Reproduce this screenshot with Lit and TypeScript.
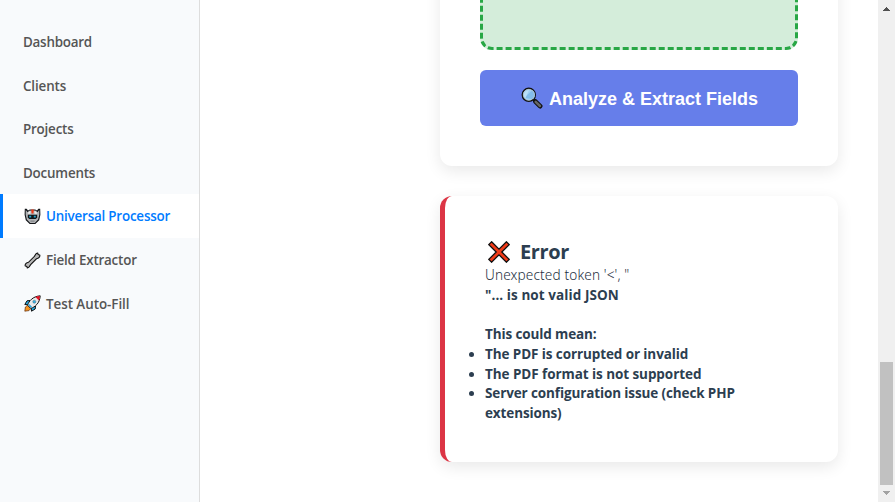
import { LitElement, html, css, svg } from "lit";
import { customElement } from "lit/decorators.js";
import { classMap } from "lit/directives/class-map.js";

const robot = svg`<svg class="ico" viewBox="0 0 17 17">
  <path d="M.8.800H2.600L4 2.600 5.800 1.400h5.400L13 2.600 14.400.800h1.800l.2 6-1.200 5.400-3.900 3.900H5.700L1.800 12.200.6 6.800Z" fill="#15171a"/>
  <path d="M1.700 2 3.600 4.200 5.600 2.500h5.800l2 1.700L15.300 2v4.800l-1.200 4.700-3.300 3.500H6.200l-3.300-3.500-1.200-4.700Z" fill="#b2b4b6"/>
  <path d="M7.200 1.600h2.600l-.4 4H7.600Z" fill="#f03a17"/>
  <path d="M4.500 3.800 6.500 3v2.800H4Zm8 0L10.500 3v2.800H13Z" fill="#eee"/>
  <path d="M3.800 6.800h9.400v3l-1.500 1.200H5.300L3.800 9.800Z" fill="#111518"/>
  <path d="M5.200 7.700h2v1.900h-2Zm4.600 0h2v1.900h-2Z" fill="#24a6cc"/>
  <path d="M6.400 12.600h4.200v1H6.400Z" fill="#77797b"/></svg>`;

const wrench = svg`<svg class="ico" viewBox="0 0 17 17">
  <path d="M3.300 13.700 13.600 3.400" stroke="#111" stroke-width="4.200"/>
  <path d="M11 5.600c-.6-2 .6-4.300 2.700-4.600l.5 1.600 1.600.5c.4 2.100-1.600 3.700-3.500 3.300M6 11.400c.6 2-.6 4.300-2.700 4.600l-.5-1.600-1.600-.5c-.4-2.100 1.600-3.700 3.500-3.300" fill="#b4b4b4" stroke="#111" stroke-width="1.100"/>
  <path d="M3.400 13.600 13.500 3.500" stroke="#b8b8b8" stroke-width="2.100"/></svg>`;

const rocket = svg`<svg class="ico" viewBox="0 0 17 17">
  <path d="m6 5.500-3 .3L.8 9.500l3 .2M11.500 11l-.3 3-3.700 2.200-.2-3" fill="#27a9e3" stroke="#111" stroke-width="1"/>
  <path d="M3.400 10.400 1.400 12 .8 16.200 5 15.600 6.700 13.600Z" fill="#f7941d" stroke="#5b2b10" stroke-width=".7"/>
  <path d="M3.600 10.200C5 6 8.500 1.500 16.200.8 15.800 8.300 11 12 6.800 13.400Z" fill="#e9eaeb" stroke="#111" stroke-width="1"/>
  <path d="M11.400 2c1.500-.7 3-.9 4.500-.9-.1 1.600-.4 3.100-.9 4.500Z" fill="#e81224"/>
  <circle cx="10.300" cy="6.700" r="1.500" fill="#2fb1e8" stroke="#55646d" stroke-width=".5"/>
  <path d="m4.700 9.500 2.800 2.800" stroke="#27a9e3" stroke-width="1.500"/></svg>`;

const lens = svg`<svg class="lens" viewBox="0 0 22 22">
  <path d="m12.200 12.400 2.500 2.500" stroke="#111" stroke-width="2.200"/>
  <path d="m14.500 14.600 4.600 4.500" stroke="#111" stroke-width="4.800" stroke-linecap="round"/>
  <path d="m14.700 14.800 4.300 4.200" stroke="#666" stroke-width="2.500" stroke-linecap="round"/>
  <circle cx="7.800" cy="7.800" r="6.500" fill="#9fd0f4" stroke="#111" stroke-width="1.500"/>
  <path d="M3.300 10.800 11.500 3a6 6 0 0 1 .7 9.200" fill="#83bdec"/>
  <path d="M2.800 8.500C2.600 5.500 5 3 8 2.900L4.400 11.300A5 5 0 0 1 2.800 8.500Z" fill="#b9dff9"/>
  <circle cx="7.800" cy="7.800" r="5.500" fill="none" stroke="#bcc6cc" stroke-width=".7"/></svg>`;

const cross = svg`<svg class="cross" viewBox="0 0 22 22">
  <path d="M3.600.8 11 8.200 18.400.8l2.800 2.800L13.800 11l7.400 7.400-2.800 2.800L11 13.800l-7.400 7.400L.8 18.400 8.200 11 .8 3.600Z" fill="#f03a17" stroke="#111" stroke-width="1.300"/></svg>`;

const items = [
  { label: "Dashboard", cls: "n0" },
  { label: "Clients", cls: "n1" },
  { label: "Projects", cls: "n2" },
  { label: "Documents", cls: "n3" },
  { label: "Universal Processor", cls: "n4", icon: robot, active: true },
  { label: "Field Extractor", cls: "n5", icon: wrench },
  { label: "Test Auto-Fill", cls: "n6", icon: rocket },
];

@customElement("app-root")
export class AppRoot extends LitElement {
  static styles = css`
    :host { display: flex; height: 502px; overflow: hidden; background: #fff; color: #2c3e50;
      font: 14px/19.6px "Open Sans", "Noto Sans", sans-serif; }
    * { box-sizing: border-box; }
    svg { display: block; flex: none; fill: none; }
    nav { width: 200px; flex: none; padding-top: 19.600px; background: #f8fafc; border-right: 1px solid #ddd; }
    .item { display: flex; align-items: center; height: 43.600px; padding: 2.600px 0 0 20px; border-left: 3px solid transparent;
      color: #555; font-weight: 600; font-size: 13.400px; letter-spacing: -.2px; white-space: nowrap; }
    .n0 { letter-spacing: -.24px; }
    .n1 { letter-spacing: -.12px; padding-top: 1px; }
    .n6 { letter-spacing: -.04px; padding-top: 1px; }
    .active { background: #fff; border-left-color: #007bff; color: #007bff; }
    .ico { width: 17px; height: 17px; margin: -1px 5px 0 1px; }
    main { flex: 1; display: flex; flex-direction: column; gap: 30px; padding-left: 240px; min-width: 0; }
    .card { width: 398px; border-radius: 12px; background: #fff; box-shadow: 0 5px 16px rgba(0,0,0,.09); flex: none; }
    .upload { margin-top: -200px; height: 366px; padding: 0 40px 40px; display: flex; flex-direction: column; gap: 20px; }
    .drop { flex: 1; border: 3px dashed #28a745; border-radius: 12px; background: #d4edda; }
    .btn { height: 56px; flex: none; display: flex; align-items: center; justify-content: center; border: 0; border-radius: 6px;
      background: #667eea; color: #fff; font: bold 18px "Liberation Sans", Arial, sans-serif; padding: 1px 0 0 1px; }
    .btn span { padding-top: 1px; }
    .lens { width: 22px; height: 22px; margin: -1px 6px 0 0; }
    .error { height: 266px; padding: 40px 40px 39px 40px; border-left: 5px solid #dc3545; }
    h3 { margin: 0; height: 29.100px; line-height: 29.100px; font-size: 20px; font-weight: 700; display: flex; align-items: center; padding-top: 2px; }
    .title { letter-spacing: -.4px; }
    .cross { width: 22px; height: 22px; margin: 0 10px 0 3px; }
    .line { display: block; height: 19.600px; white-space: nowrap; }
    .thin { font-family: "Noto Sans", "Open Sans", sans-serif; font-weight: 350; font-size: 13.600px; height: 20.600px; letter-spacing: .14px; color: #1c2e40; }
    .bold { font-weight: 700; font-size: 13.500px; }
    .t1 { letter-spacing: .08px; }
    .t2 { letter-spacing: -.12px; }
    .gap { margin-top: 20px; }
    ul { margin: .200px 0 0; padding: 0; font-weight: 700; font-size: 13.500px; letter-spacing: -.1px; list-style: disc; }
    .t4 { letter-spacing: -.07px; }
    .t5 { letter-spacing: -.12px; }
    .scroll { width: 17px; flex: none; background: #f0f0f0; display: flex; flex-direction: column; align-items: center; justify-content: space-between; padding: 7px 0 7px; }
    .thumb { width: 13px; height: 123px; background: #c1c1c1; margin-top: 351px; margin-bottom: auto; }
    .arrow { width: 7px; height: 4px; }
  `;

  render() {
    return html`
      <nav>${items.map((i) => html`<div class=${classMap({ item: true, active: !!i.active })}>${i.icon ?? ""}<span class=${i.cls}>${i.label}</span></div>`)}</nav>
      <main>
        <section class="card upload">
          <div class="drop"></div>
          <button class="btn">${lens}<span>Analyze &amp; Extract Fields</span></button>
        </section>
        <section class="card error">
          <h3>${cross}<span class="title">Error</span></h3>
          <div class="line thin"><span class="t0">Unexpected token '&lt;', "</span></div>
          <div class="line bold"><span class="t1">"... is not valid JSON</span></div>
          <div class="line bold gap"><span class="t2">This could mean:</span></div>
          <ul>
            <li><span class="t3">The PDF is corrupted or invalid</span></li>
            <li><span class="t4">The PDF format is not supported</span></li>
            <li><span class="t5">Server configuration issue (check PHP extensions)</span></li>
          </ul>
        </section>
      </main>
      <div class="scroll">
        <svg class="arrow" viewBox="0 0 7 4"><path d="M3 0h1v1h1v1h1v1h1v1H0V3h1V2h1V1h1Z" fill="#505050"/></svg>
        <div class="thumb"></div>
        <svg class="arrow" viewBox="0 0 7 4"><path d="M0 0h7v1H6v1H5v1H4v1H3V3H2V2H1V1H0Z" fill="#a3a3a3"/></svg>
      </div>`;
  }
}
